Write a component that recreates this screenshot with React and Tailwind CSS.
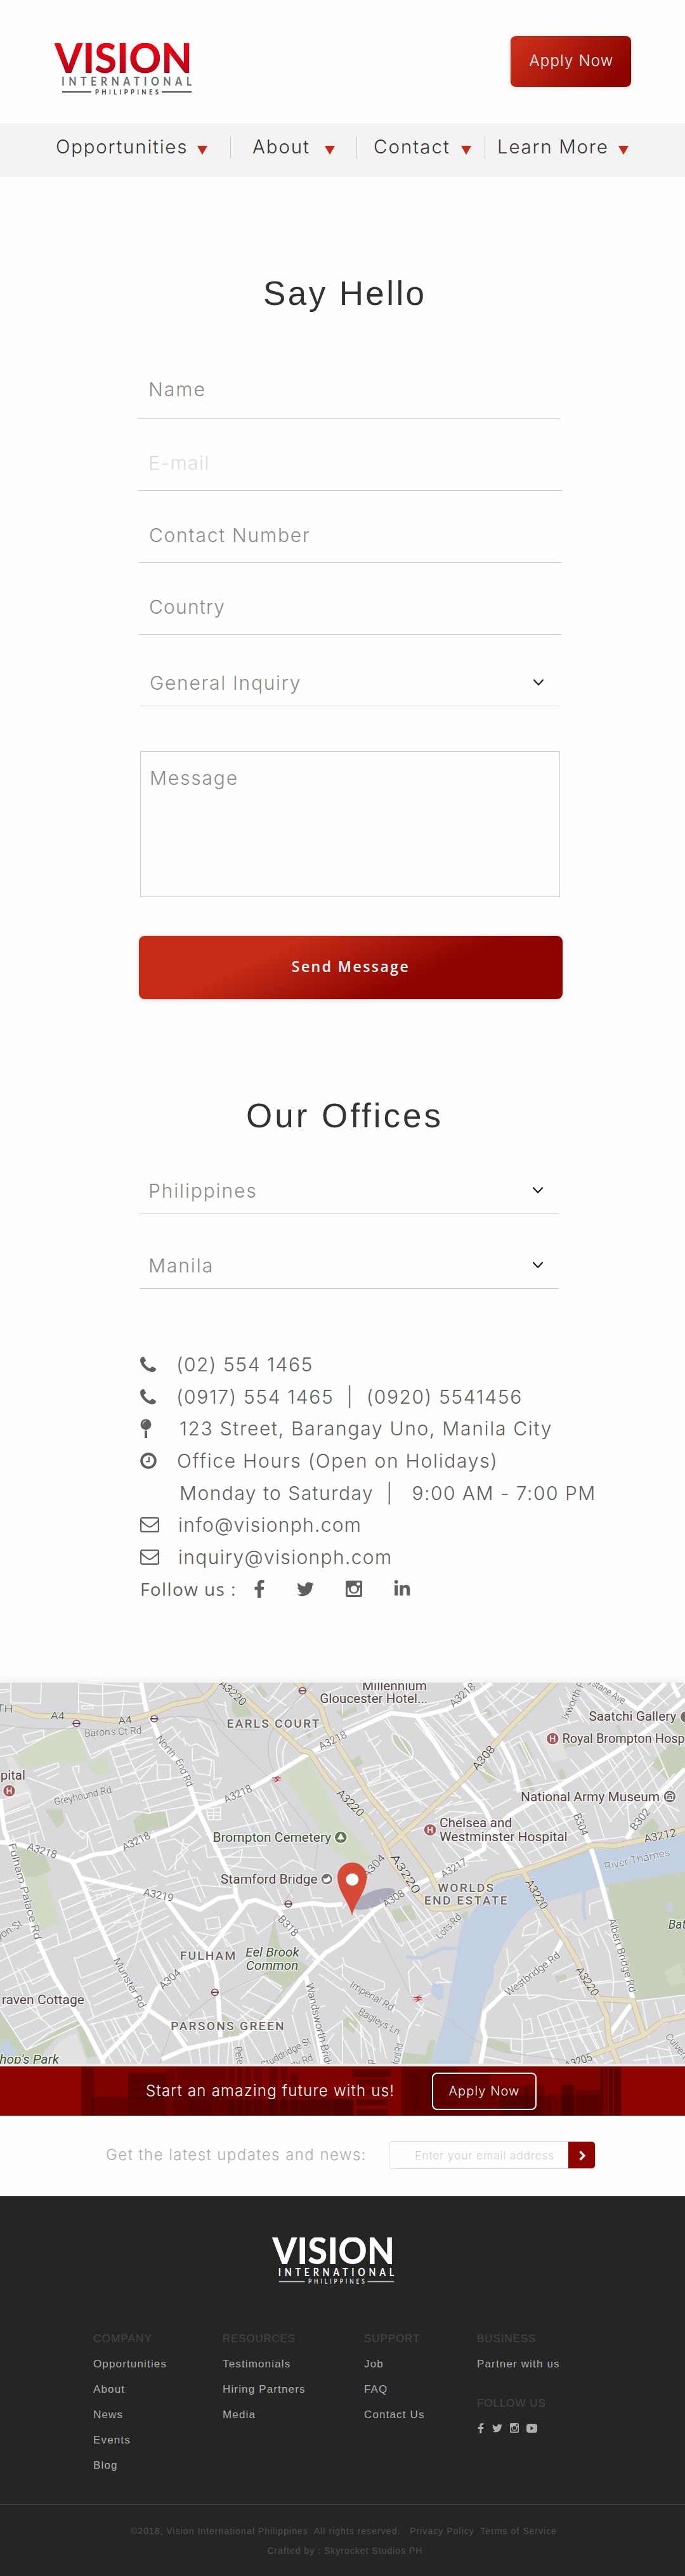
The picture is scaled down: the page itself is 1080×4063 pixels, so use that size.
import React from "react";
import { FaFacebookF, FaTwitter, FaLinkedinIn } from "react-icons/fa";

const lerp = (a, b, t) => [a[0] + (b[0] - a[0]) * t, a[1] + (b[1] - a[1]) * t];

// n parallel streets spread between segment a-b and segment c-d
const family = (a, b, c, d, n) => {
  let out = "";
  for (let i = 0; i < n; i++) {
    const t = n === 1 ? 0 : i / (n - 1);
    const p = lerp(a, b, t);
    const q = lerp(c, d, t);
    out += `M${p[0].toFixed(0)} ${p[1].toFixed(0)}L${q[0].toFixed(0)} ${q[1].toFixed(0)}`;
  }
  return out;
};

const STREETS = [
  "M0 75L40 72M360 41L650 62M190 41L185 140L50 135L50 41M0 90L48 80M360 41L360 185M360 90L470 95L570 80L650 95M470 41L470 200M570 80L555 200M360 130L440 150L655 140M375 150h50v15h-50zM680 110L740 41M680 130L790 90M735 60L800 90M820 80L850 110",
  "M0 390L60 380L220 290L350 240M350 240L420 400M105 290L200 265L200 300L120 330ZM0 350L50 340L80 380M0 280L70 250M420 380L560 320L700 250M420 400L500 350L700 300",
  "M560 320L690 300",
  family([575, 360], [640, 500], [700, 330], [720, 410], 4),
  family([500, 350], [550, 490], [575, 325], [620, 470], 4),
  "M560 320L640 510L690 660M550 490L720 420M620 520L870 480M520 550L630 510M155 640L290 560L540 490M0 670L150 610M125 490L280 550L310 600M500 350L560 520",
  "M155 460L265 420L270 440L170 485M210 500L270 470M330 440L360 520L400 590M335 440L360 435L360 470M280 600L320 570",
  "M0 600L130 560L160 640L205 790M20 670L140 625M20 710L150 665M30 750L170 700M40 790L180 745M70 800L55 760M140 800L130 740M170 810L160 760",
  "M300 660L330 730L380 780L400 750L500 710M400 750L430 850M350 760L370 740L400 760L400 820L360 840M340 840L320 870",
  family([400, 590], [500, 560], [460, 720], [540, 690], 3),
  "M540 690L620 650L690 660M650 600L860 530M660 640L880 570M670 660L890 620M760 650L775 725M500 710L540 840M430 760L510 730M450 800L520 770M510 840L560 930",
  "M740 280L790 250L820 300L870 340L900 330L1000 390L910 220L870 230L800 200L740 230M760 330L830 270M880 350L880 410L940 400L970 410L960 480L900 470L880 430M720 430L780 430L780 500L720 500ZM920 390L980 410L980 500L1015 490L990 540L930 520M1000 380L960 250L900 210M840 300L850 340M780 400L830 420",
  "M945 640L1010 630L1010 690L955 690ZM950 655h60M950 670h60M978 635v55M890 560L960 570L970 600L890 595M960 510L970 560L985 610",
  family([940, 760], [1010, 900], [1240, 690], [1200, 930], 5),
  family([1110, 570], [1240, 520], [1200, 760], [1330, 720], 3),
  "M1110 660L1200 860L1270 930M1190 540L1280 690L1400 930M1150 550L1240 650L1320 600M1280 640L1300 700M780 770L870 720L920 770L870 810L830 800M720 800L800 780L860 830L770 930M800 930L810 860L880 800M700 740L760 930",
  family([340, 900], [560, 840], [380, 990], [620, 930], 4),
  "M880 840L940 810L950 870L1010 860M880 880L920 930M840 780L830 850L860 900M1010 880L1110 830L1100 890L1040 930M1280 920L1340 880L1380 900L1440 930",
  "M1030 130Q1030 210 1090 260M1310 270L1440 190M1350 310L1500 230M1380 350L1530 260M1280 450Q1240 330 1310 270M1300 440Q1280 350 1330 300M1165 60L1200 110L1230 130L1290 41M1110 90L1165 50M1220 190L1380 41M1250 225L1430 70M1100 41L1160 90M1240 100L1310 150M1460 400L1540 500M1480 390L1568 480M1440 380L1568 330M1470 100L1568 60M1480 150L1568 110M980 140L1040 150",
  // west of Munster Road
  "M0 990L110 960M0 1040L120 1010M0 1090L130 1060M0 1140L140 1110M0 1210L150 1180M0 1290L150 1230M10 1270L50 1370L120 1560L240 1680M0 1360L170 1270L260 1230L270 1280M170 1320L330 1260M0 1450L210 1340M20 1500L240 1410",
  "M0 1580L280 1470M40 1620L300 1520M60 1680L330 1560M90 1740L370 1600M120 1780L220 1700L350 1640M0 1590L120 1780L390 1650M80 1390L120 1470L190 1640M110 1400L130 1430L150 1470L250 1410",
  "M270 1070L330 1260L480 1200M270 1070L420 1020",
  family([270, 1070], [330, 1260], [410, 1010], [470, 1190], 5),
  family([375, 1010], [470, 1230], [600, 930], [620, 1110], 4),
  family([430, 1110], [520, 1330], [720, 1000], [790, 1180], 6),
  "M340 1350L500 1280M340 1340L370 1440L520 1380M360 1450L410 1560L430 1630M380 1480L550 1400M420 1530L570 1450M430 1570L600 1490M400 1640L620 1540M410 1660L660 1600",
  "M570 1400L620 1290L670 1050M580 1040L650 1220L750 1440M520 1180L590 1170L600 1200L650 1180M640 1200L780 1460M600 1490L660 1480",
  family([640, 1300], [830, 1220], [740, 1500], [960, 1390], 6),
  family([730, 1480], [830, 1400], [830, 1620], [910, 1540], 3),
  family([420, 1650], [620, 1600], [520, 1850], [730, 1790], 5),
  "M480 1740L640 1660M510 1640L600 1840M580 1620L660 1780L640 1850L560 1750M640 1700L690 1710L700 1750L660 1780M850 1640L980 1620",
  family([780, 1640], [1000, 1560], [860, 1740], [1010, 1650], 4),
  family([860, 1760], [1100, 1700], [880, 1850], [1080, 1850], 6),
  "M420 1030L530 1010M430 1050L520 1030M440 1040L450 1070M470 1030L480 1060M500 1020L510 1055",
  "M700 930L760 960L850 930M760 1000L900 960M780 1040L920 1000L1060 1010M900 960L940 1060M860 930L920 1080M980 940L1010 1010",
  "M940 1160L1000 1150L1010 1200L950 1210ZM890 1220L980 1240L1050 1180L1110 1200L1120 1260L1040 1290L1020 1240L1060 1220M900 1290L950 1240M1100 1180L1180 1200M1130 1130L1180 1230L1270 1160M1030 1250L1070 1310",
  "M1000 1450L1200 1290M1070 1490L1200 1430L1290 1500M1100 1540L1210 1430M1020 1530L1140 1620L1200 1650M1010 1600L1090 1640L1160 1580M1130 1500L1280 1570M1110 1570L1240 1630M1200 1430L1290 1480M1100 1610L1160 1680",
  family([1370, 1090], [1530, 1080], [1440, 1260], [1568, 1200], 4),
  "M1280 1230L1440 1200L1568 1170M1330 1250L1380 1210M1400 1350L1440 1300M1430 1350L1568 1450M1450 1330L1530 1400L1568 1380M1460 1420L1568 1500M1340 1600L1360 1540L1460 1490M1420 1590L1490 1570M1270 1020L1300 1100M1300 990L1340 1060M1400 960L1430 1060L1480 1060M1200 1000L1260 1090",
  family([1210, 1640], [1400, 1600], [1280, 1850], [1460, 1850], 4),
  "M1110 1720L1140 1850M1060 1720L1070 1850M1130 1700L1220 1850M1490 1700L1568 1640M1500 1760L1568 1850M1490 1760L1530 1700",
  // Kensington and Chelsea
  family([1568, 130], [1900, 60], [1568, 190], [1780, 160], 3),
  "M1568 260L1800 160M1568 220L1690 170M1690 190L1630 50M1760 150L1690 41M1830 160L1760 41M1670 270L1800 500M1770 210L1890 400M1680 320L1740 290M1710 350L1750 310M1798 280Q1780 340 1890 400Q1900 310 1798 280M1800 270L1760 220",
  family([1660, 510], [1900, 400], [1780, 650], [2040, 560], 3),
  family([1568, 500], [1830, 760], [1890, 400], [2180, 650], 6),
  "M1660 450L1740 430L1740 500L1690 520ZM1568 600L1830 420M1600 640L1870 480M1760 450L1980 650M1810 460L1930 620M1900 400L2110 590M1650 700L1760 600M1700 760L1830 640M1730 800L1860 680M1990 660L2070 600M1960 640L2030 570L2110 580",
  family([1900, 230], [2010, 180], [2080, 440], [2210, 380], 4),
  "M1960 250L2130 490M2010 190L2220 460M2040 170L2240 420M1900 180L2010 140M1920 150L2100 110M2070 250L2180 180M2100 200L2160 190M2080 330L2140 360M2070 300L2150 280",
  family([2160, 120], [2340, 60], [2260, 300], [2460, 120], 4),
  "M2210 170L2380 41M2230 220L2460 100M2260 300L2380 230M2150 220L2230 180M2320 200L2300 170M2300 120L2340 70M2420 41L2340 130M2200 41L2260 120",
  family([2280, 350], [2430, 270], [2340, 470], [2540, 490], 4),
  "M2270 350L2420 270L2560 520M2330 350L2380 320L2430 430L2400 440M2450 290L2540 250L2650 220M2460 400L2500 500M2350 520L2460 470M2290 470L2310 410M2350 550L2590 500M2390 600L2480 540M2180 560L2340 500M2250 640L2340 590",
  "M2120 480L2260 640M2180 440L2310 520M2240 370L2300 480M2060 470L2180 600M2080 620L2240 590M1990 690L2060 650L2210 660M2060 680L2220 720M2120 700L2130 780M1990 760L2200 860",
  family([2560, 110], [2700, 41], [2610, 240], [2860, 200], 5),
  "M2570 150L2640 160L2700 240M2640 41L2800 220M2700 90L2930 230M2740 60L2970 200M2800 41L3000 150M2620 120L2600 230M2860 120L2740 230M2950 41L3060 150M2980 180L3136 41M3020 210L3080 160M2870 41L2960 130M2590 60L2660 200",
  family([2610, 400], [3010, 200], [2690, 500], [3120, 330], 7),
  family([2650, 470], [2980, 300], [2800, 700], [3080, 540], 6),
  family([2700, 560], [2990, 660], [2900, 360], [3136, 500], 6),
  family([2290, 690], [2490, 570], [2440, 910], [2650, 790], 5),
  family([2360, 750], [2440, 900], [2590, 630], [2690, 790], 4),
  "M2520 560L2600 720M2480 580L2560 740M2570 680L2680 660M2790 700L2870 600L2890 800M2860 640L2940 560L3110 650M2990 600L3060 720M3020 570L3100 700M2700 790L2860 770M2720 620L2770 790",
  family([1980, 800], [2200, 740], [2060, 930], [2360, 830], 5),
  family([1900, 1050], [2040, 900], [2060, 930], [2230, 880], 3),
  // Worlds End and Sands End
  "M1740 1060L1890 1310L1930 1380M1840 1020L1990 1200M1568 1110L1690 960M1568 1190L1660 1140L1740 1270L1710 1260L1620 1130M1690 1100L1740 1200L1840 1290L1850 1270L1740 1070",
  family([1840, 1240], [1890, 1310], [2030, 1120], [2080, 1200], 3),
  family([1830, 1100], [2050, 1080], [1960, 1290], [2100, 1190], 5),
  "M1568 1340L1580 1380L1760 1460L1760 1490L1680 1510M1568 1370L1568 1430L1620 1480L1830 1600L1880 1650L1870 1680M1568 1490L1640 1570L1700 1580M1890 1360L2000 1500L1930 1530M1900 1380L1870 1410L1880 1520L1940 1590L2070 1640M1980 1400L2010 1390L2020 1440L2060 1460M1990 1500L2000 1460L2065 1460M1820 1510L1800 1600L1780 1560L1830 1490M1940 1560L1870 1680L1830 1850M1900 1580L1940 1600L1930 1620M1900 1660L1925 1665",
  family([1650, 1660], [1820, 1720], [1700, 1850], [1840, 1790], 3),
  family([1568, 1640], [1820, 1690], [1568, 1850], [1830, 1760], 4),
  "M1568 1720L1640 1850M1580 1570L1700 1720L1720 1850M1600 1650L1720 1780M1568 1590L1620 1640",
  // Battersea
  "M2290 1460L2330 1380L2470 1240L2570 1190L2650 1240L2700 1210L2780 1180L2800 1160M2400 1290L2620 1160M2400 1200L2470 1160L2460 1230L2390 1240ZM2350 1370L2380 1430M2320 1300L2330 1380M2430 1330L2480 1390M2450 1130L2480 1200M2550 1150L2590 1240M2290 1440L2370 1400L2370 1450",
  "M2290 1460L2290 1490L2310 1520L2500 1520L2570 1540L2740 1550L2900 1550M2400 1460L2420 1540L2480 1520M2530 1420L2670 1350M2560 1460L2690 1420M2640 1430L2680 1530M2620 1490L2720 1460L2800 1450",
  family([2720, 1220], [2790, 1180], [2740, 1290], [2810, 1270], 2),
  "M2650 1250L2690 1390L2700 1480M2620 1170L2700 1300M2760 1070L2700 1090L2700 1140M2730 1190L2790 1320L2810 1450L2800 1600M2770 1220L2820 1260M2690 1470L2900 1450M2720 1500L2730 1540",
  family([2460, 1620], [2640, 1550], [2540, 1850], [2750, 1790], 5),
  family([2460, 1620], [2520, 1740], [2640, 1550], [2760, 1690], 3),
  "M2230 1720L2400 1730L2560 1710L2700 1670L2780 1620M2390 1640L2390 1850M2350 1560L2390 1640M2340 1720L2340 1780L2390 1790M2400 1640L2430 1630L2440 1700L2390 1710M2500 1750L2560 1860M2410 1800L2550 1770M2210 1810L2400 1850",
  family([2640, 1700], [2780, 1640], [2740, 1850], [2800, 1770], 4),
  "M2730 1860L2900 1790L3136 1700M2800 1730L2900 1680M2830 1770L2870 1640L2900 1680M2900 1550L3136 1520M2940 1550L2970 1720M3000 1550L3030 1650M3080 1540L3100 1640M2950 1720L3136 1590M2900 1830L3136 1800M2960 1800L2970 1860M3010 1780L3030 1860M3060 1760L3090 1860M2960 1760L3060 1780",
].join("");

const PARKS = [
  "M1063 120L1110 120L1160 200L1080 205Q1050 160 1063 120M1155 70L1190 50L1225 95L1205 120M1395 270L1415 260L1430 295L1410 305",
  "M205 640L285 640L295 700L260 730M610 690L670 645L755 655L775 725L625 755M60 820L200 840L235 930L170 960L110 960",
  "M1255 1160L1285 1300L1420 1390L1310 1490L1200 1640L1185 1640L1300 1490L1210 1420M1015 1600L1120 1710L1020 1720",
  "M0 1590L115 1780L340 1640L370 1650L440 1810L400 1820L350 1670L260 1720L200 1790L180 1850L0 1850",
  "M1798 280Q1785 340 1893 400Q1890 320 1798 280M1603 415L1643 385L1663 425L1623 445M2183 450L2228 430L2278 495L2238 520M2368 335L2408 320L2443 395L2413 415M2038 370L2118 470L2105 465M2393 490L2423 485L2453 560L2428 555M2553 460L2578 450L2593 490L2568 500",
  "M2978 425L3068 330L3136 350L3136 470L3068 515M3048 230L3136 200L3136 310L3060 250M2928 740L2988 680L3018 720L3008 750L2930 765M2208 165L2223 150L2258 195L2238 205M1568 180L1628 150L1635 175L1568 210M1540 180L1568 160V210",
  "M2580 350L2600 310L2650 340M2820 245L2835 240L2850 290L2840 290M2350 675L2365 680L2390 750L2370 730M2540 870L2680 825L2690 835",
  "M2773 1000L3136 930L3136 1525L2908 1542M1793 1120L1883 1090L1908 1160L1808 1180M2538 1430L2588 1420L2598 1450L2553 1465M2228 1720L2328 1750L2343 1800L2223 1760M1843 1790L1948 1805L1968 1730L1998 1735L1968 1850L1840 1850M2108 1140L2138 1120L2148 1145L2128 1170M1568 1640L1628 1600L1658 1610L1618 1700L1568 1660",
].join("");

const PALE_PARKS =
  "M60 380L220 270L360 255L410 420L310 425L100 445ZM395 430L480 385L515 465L450 485ZM1290 470L1415 395L1568 700L1720 880L1640 920L1520 830ZM110 960L210 940L275 1180L170 1225ZM160 1760L330 1640L345 1650L200 1780Z";

const WHITE_ROADS = [
  "M645 41L670 170L705 240L740 340L830 430L870 530L905 640L960 760L1040 930L1075 990L1080 1050L1105 1110",
  "M0 795L100 810L250 860L340 890L430 855L510 845L640 790L780 735Q860 700 905 640L1080 580L1210 505L1400 385L1568 290L1640 255L1790 185L1920 200L2040 170L2120 130L2200 80L2250 41",
  "M0 590L20 740L45 810L100 960L150 1210L250 1440L340 1590L400 1690L470 1830L475 1860",
  "M330 885L370 970L440 1150L520 1330L600 1500L680 1590L780 1660L855 1775",
  "M370 965L640 1025L770 1060L915 1115L1000 1062L1080 1050",
  "M760 1070L860 1210L955 1310L990 1430L1000 1550L1010 1720",
  "M955 1310L1130 1080L1170 1070L1270 1110L1430 1085L1500 1095L1568 1090",
  "M470 1820L660 1620L720 1490L830 1400L955 1350",
  "M740 1825L850 1775L1100 1720L1210 1640L1290 1560L1390 1430L1490 1320L1568 1270L1718 1115L1868 1015L2028 940L2140 870L2215 830L2220 775L2330 670L2560 530L2850 350L3000 240L3136 120",
  "M1270 1110L1350 1230L1460 1350M1400 1430L1430 1560L1480 1860",
  "M1905 195L1988 320L2098 500L2208 620L2268 740L2388 920M2128 41L2188 190L2288 310L2348 430L2378 560M2553 530L2628 650L2698 800L2738 930L2798 1160L2898 1540M2868 780L2968 620L3136 450M2918 170L3048 41M2748 41L2938 180M3078 41L3108 110",
  "M2573 1260L2528 1350L2308 1510L2218 1600L2208 1670L2223 1720L2198 1860M2898 1550L2788 1710",
];

const BEIGE_ROADS = [
  "M0 158L60 160Q110 175 140 190T250 197Q340 195 440 210Q520 228 600 215Q700 190 790 145L920 120Q970 95 1000 30",
  "M1000 30L1115 110L1240 225L1380 360L1420 372L1500 500L1568 570L1680 680L1750 790L1790 880L1878 1000Q1950 1110 2000 1112Q2110 1115 2180 1070Q2215 1030 2240 980Q2260 955 2400 933",
  "M1350 30L1470 160L1500 260L1568 370L1700 590L1835 755L1960 930L2005 1025",
  "M2550 30L2310 280L2130 490L1960 650L1778 818",
  "M3150 730L2990 775L2810 815Q2700 800 2670 830Q2570 870 2380 935",
  "M2393 930L2488 1110L2588 1260L2628 1330L2678 1430L2738 1530L2778 1620L2788 1730L2840 1870",
  "M2738 1538L2898 1548L2948 1710M2668 1820L2798 1770L2948 1710L3038 1640L3150 1615",
];

// text, x, y, rotation, size, drawn length, colour
const LABELS = [
  ["A4", 232, 212, 3, 48, 62, "#3c3c3c"],
  ["A4", 543, 238, -6, 48, 62, "#3c3c3c"],
  ["TH", -18, 180, 3, 52, 78, "#666"],
  ["Baron's Ct Rd", 388, 296, -3, 47, 262, "#5c5c5c"],
  ["North", 712, 308, 50, 46, 116, "#5c5c5c"],
  ["End Rd", 802, 410, 66, 46, 138, "#5c5c5c"],
  ["Greyhound Rd", 252, 622, -13, 46, 268, "#5c5c5c"],
  ["A3218", 1034, 612, -25, 49, 136, "#505050"],
  ["A3218", 570, 838, -27, 49, 136, "#505050"],
  ["A3218", 122, 830, 18, 49, 138, "#505050"],
  ["A3218", 1470, 360, -27, 49, 136, "#505050"],
  ["A3218", 2076, 158, -42, 49, 140, "#505050"],
  ["A3220", 1000, 49, 44, 51, 150, "#2c2c2c"],
  ["A3220", 1538, 566, 46, 51, 155, "#2c2c2c"],
  ["A308", 2184, 458, -50, 51, 132, "#2c2c2c"],
  ["A3220", 1786, 866, 58, 51, 210, "#2c2c2c"],
  ["A304", 1680, 968, -48, 49, 128, "#505050"],
  ["A3217", 2032, 966, -32, 47, 128, "#505050"],
  ["Fulham Palace Rd", 38, 806, 75, 46, 470, "#5c5c5c"],
  ["A3219", 655, 1048, 12, 49, 138, "#505050"],
  ["B318", 1270, 1162, 48, 49, 112, "#505050"],
  ["Munster Rd", 518, 1354, 62, 47, 262, "#5c5c5c"],
  ["A304", 746, 1495, -42, 49, 114, "#505050"],
  ["Bryon St", -44, 1286, -33, 47, 178, "#5c5c5c"],
  ["Wandsworth Bridge", 1400, 1468, 77, 47, 440, "#5c5c5c"],
  ["Studdridge St", 1206, 1868, -29, 46, 252, "#5c5c5c"],
  ["Party Rd", 1292, 1886, -22, 46, 155, "#5c5c5c"],
  ["Peterb", 1072, 1766, 80, 46, 125, "#5c5c5c"],
  ["A308", 1766, 1106, -33, 49, 108, "#505050"],
  ["Lots Rd", 2014, 1258, -46, 47, 146, "#5c5c5c"],
  ["Imperial Rd", 1598, 1480, 31, 47, 226, "#5c5c5c"],
  ["Bagleys Ln", 1636, 1608, 29, 47, 212, "#5c5c5c"],
  ["ford Rd", 1824, 1850, -78, 46, 100, "#5c5c5c"],
  ["d", 1684, 1824, 92, 46, 22, "#5c5c5c"],
  ["A3220", 2404, 986, 60, 51, 152, "#2c2c2c"],
  ["A3220", 2634, 1400, 58, 51, 152, "#2c2c2c"],
  ["Westbridge Rd", 2328, 1526, -38, 47, 304, "#5c5c5c"],
  ["Albert Bridge Rd", 2784, 1162, 74, 47, 362, "#5c5c5c"],
  ["A3205", 2594, 1872, -20, 51, 128, "#2c2c2c"],
  ["Culvert", 3044, 1716, 52, 46, 140, "#5c5c5c"],
  ["B304", 2624, 668, 68, 49, 108, "#505050"],
  ["B302", 2908, 744, -52, 49, 116, "#505050"],
  ["A3212", 2952, 798, -12, 51, 150, "#2c2c2c"],
  ["Ixworth Pl", 2598, 220, -66, 46, 205, "#5c5c5c"],
  ["Elystane Ave", 2664, 26, 32, 46, 220, "#5c5c5c"],
  ["River Thames", 2770, 928, -13, 49, 308, "#66788f"],
];

// text, x, y, size, drawn length, colour, style
const PLACES = [
  ["EARLS COURT", 1038, 253, 56, 424, "#6d645d", "a"],
  ["FULHAM", 824, 1354, 56, 254, "#6d645d", "a"],
  ["PARSONS GREEN", 782, 1686, 56, 518, "#6d645d", "a"],
  ["WORLDS", 2004, 1032, 56, 256, "#6d645d", "a"],
  ["END ESTATE", 1942, 1092, 56, 380, "#6d645d", "a"],
  ["Millennium", 1658, 76, 60, 296, "#51413d", "p"],
  ["Gloucester Hotel...", 1464, 138, 60, 494, "#51413d", "p"],
  ["Saatchi Gallery", 2696, 222, 60, 400, "#51413d", "p"],
  ["Royal Brompton Hospital", 2574, 326, 60, 640, "#51413d", "p"],
  ["National Army Museum", 2384, 601, 60, 636, "#51413d", "p"],
  ["Chelsea and", 2012, 726, 60, 332, "#51413d", "p"],
  ["Westminster Hospital", 2012, 790, 60, 586, "#51413d", "p"],
  ["Brompton Cemetery", 974, 794, 60, 542, "#3b4f32", "p"],
  ["Stamford Bridge", 1010, 992, 60, 444, "#51413d", "p"],
  ["pital", 2, 500, 60, 114, "#51413d", "p"],
  ["raven Cottage", 8, 1564, 60, 378, "#51413d", "p"],
  ["Eel Brook", 1124, 1338, 60, 246, "#3b4f32", "i"],
  ["Common", 1126, 1402, 60, 240, "#3b4f32", "i"],
  ["hop's Park", -2, 1844, 60, 272, "#3b4f32", "i"],
  ["Battersea", 3060, 1206, 60, 230, "#3b4f32", "i"],
];

const TUBES = [[350, 234], [706, 212], [1385, 79], [1320, 1089], [984, 1507]];

function MapView() {
  return (
    <svg
      className="block h-[601px] w-full shrink-0 overflow-hidden bg-[#d9d9db]"
      viewBox="0 41 3136 1804"
      preserveAspectRatio="none"
      fill="none"
      strokeLinejoin="round"
      fontFamily="Roboto, sans-serif"
    >
      <path d={PALE_PARKS} fill="#d2dac8" />
      <path d={PARKS} fill="#c7d0ba" />
      <path d="M3040 1410L3110 1370L3136 1440V1460L3070 1478Z" fill="#d0d7c5" />
      <path d="M25 395L60 390L110 500L150 560L140 590L20 650L10 610L60 570L70 510ZM2460 280L2540 250L2600 400L2530 420ZM200 1850L270 1740L350 1700L400 1850Z" fill="#e4e2e1" />
      <path d="M2230 1000L2150 1120L2100 1280L2060 1600L1990 1700L2000 1850L2180 1850L2250 1600L2300 1450L2400 1250L2500 1130L2780 1060L2790 1010Z" fill="#dbd9d9" />
      <path d={STREETS} stroke="#f8f8f9" strokeWidth="5.500" />
      <path
        d="M3136 755L2990 790L2810 832L2690 825L2400 950Q2250 985 2215 1060L2128 1170Q2098 1230 2098 1280L2078 1410L2038 1620L1968 1850L2148 1850L2208 1580L2232 1500L2258 1460L2262 1380L2278 1350Q2310 1250 2398 1140Q2440 1100 2500 1080L2768 1000L3136 935Z"
        fill="#c2d0e1"
      />
      <path d="M1858 1338L1930 1345L2020 1300L2095 1298M2674 1020L2670 1120L2680 1165" stroke="#c2d0e1" strokeWidth="16" />
      <path d="M1980 1465L2030 1470L2032 1530L2005 1545L1972 1510ZM0 1760L40 1725L50 1760L85 1780L60 1810L0 1820ZM3046 1080L3075 1090L3080 1135L3062 1120Z" fill="#c2d0e1" />
      <path
        d="M0 240Q200 270 350 255Q540 280 690 230Q760 190 900 205Q1000 220 1010 245M890 41L1030 245Q1090 270 1180 265M1430 41L1270 230Q1190 330 1260 480M930 120L1000 260L1240 500L1400 710Q1460 830 1460 760L1440 920M1340 1020L1260 1150L1230 1290M1280 1390L960 1540L780 1690L730 1850M1690 1130L1840 1440L1900 1560M1950 1580L2060 1640L2170 1730L2300 1790L2600 1830"
        stroke="#c5c5c8"
        strokeWidth="4"
      />
      {WHITE_ROADS.map((d) => (
        <path key={d} d={d} stroke="#fff" strokeWidth="21" />
      ))}
      {BEIGE_ROADS.map((d) => (
        <path key={d} d={d} stroke="#c8c1a4" strokeWidth="28" />
      ))}
      {BEIGE_ROADS.map((d) => (
        <path key={d} d={d} stroke="#e7dec3" strokeWidth="21" />
      ))}

      <ellipse cx="1710" cy="1065" rx="105" ry="36" transform="rotate(-22 1710 1065)" fill="#55557a" fillOpacity="0.35" />

      {TUBES.map(([x, y]) => (
        <g key={x}>
          <circle cx={x} cy={y} r="15" fill="#fff" stroke="#9a4a4d" strokeWidth="5" />
          <path d={`M${x - 18} ${y}H${x + 18}`} stroke="#3d4474" strokeWidth="6" />
        </g>
      ))}
      {[[1266, 497], [1912, 1537]].map(([x, y]) => (
        <path
          key={x}
          d={`M${x - 20} ${y - 5}h40M${x - 20} ${y + 5}h40M${x + 12} ${y - 14}l-20 9l18 10l-20 10`}
          stroke="#c0454a"
          strokeWidth="4"
        />
      ))}

      {LABELS.map(([t, x, y, r, s, w, c], i) => (
        <text
          key={i}
          transform={`translate(${x} ${y}) rotate(${r})`}
          fontSize={s}
          textLength={w}
          lengthAdjust="spacingAndGlyphs"
          fill={c}
          stroke="#ededee"
          strokeWidth="6"
          paintOrder="stroke"
        >
          {t}
        </text>
      ))}
      {PLACES.map(([t, x, y, s, w, c, k]) => (
        <text
          key={t}
          x={x}
          y={y}
          fontSize={s}
          textLength={w}
          lengthAdjust={k === "a" ? "spacing" : "spacingAndGlyphs"}
          fontStyle={k === "i" ? "italic" : "normal"}
          fontWeight={k === "a" ? 500 : 400}
          fill={c}
          stroke="#f6f6f6"
          strokeWidth="8"
          paintOrder="stroke"
        >
          {t}
        </text>
      ))}

      {[[42, 553], [2530, 306], [1969, 738]].map(([cx, cy]) => (
        <g key={cx}>
          <circle cx={cx} cy={cy} r="29" fill="#a35a5c" stroke="#fff" strokeWidth="4" />
          <path d={`M${cx - 9} ${cy - 15}v30M${cx + 9} ${cy - 15}v30M${cx - 9} ${cy}h18`} stroke="#fff" strokeWidth="5" />
        </g>
      ))}
      <circle cx="3066" cy="580" r="29" fill="#766c68" stroke="#fff" strokeWidth="4" />
      <path d="M3048 574L3066 561L3084 574ZM3052 577V594H3080V577M3062 594V585H3070V594" stroke="#fff" strokeWidth="4" />
      <circle cx="3142" cy="203" r="29" fill="#766c68" stroke="#fff" strokeWidth="4" />
      <circle cx="1560" cy="773" r="29" fill="#5d7a50" stroke="#fff" strokeWidth="4" />
      <path d="M1560 755L1546 782H1574ZM1560 782V792" fill="#fff" stroke="#fff" strokeWidth="3" />
      <circle cx="1496" cy="971" r="27" fill="#7a706a" stroke="#fff" strokeWidth="4" />
      <path d="M1480 965Q1494 975 1506 955L1514 975Q1500 990 1482 985Z" fill="#fff" />

      <path
        d="M1612 1144C1600 1080 1545 1030 1545 960A67 68 0 0 1 1679 960C1679 1030 1624 1080 1612 1144Z"
        fill="#d64a37"
      />
      <circle cx="1613" cy="973" r="29" fill="#fff" />
    </svg>
  );
}

function Logo({ light }) {
  const id = light ? "logo-light" : "logo-red";
  return (
    <svg
      className={light ? "block h-[75px] w-[194px]" : "block h-[83px] w-[218px]"}
      viewBox="0 0 218 83"
      preserveAspectRatio="none"
      fontFamily="Lato, sans-serif"
    >
      <defs>
        <linearGradient id={id} x1="0" y1="0" x2="0" y2="1">
          <stop offset="0.1" stopColor={light ? "#fff" : "#fb0512"} />
          <stop offset="0.85" stopColor={light ? "#fff" : "#b00618"} />
        </linearGradient>
      </defs>
      <text x="0" y="47" fontSize="65" fontWeight="900" textLength="217" lengthAdjust="spacingAndGlyphs" fill={`url(#${id})`}>
        VISION
      </text>
      <text transform="translate(11 67) scale(0.82 1)" fontSize="19.500" fontWeight="700" textLength="250" fill={light ? "#fff" : "#66706c"}>
        INTERNATIONAL
      </text>
      <text transform="translate(64 81) scale(0.82 1)" fontSize="11.500" fontWeight="700" textLength="122" fill={light ? "#ddd" : "#3a3a3a"}>
        PHILIPPINES
      </text>
      <path d="M12 77H58M169 77H216" stroke={light ? "#bbb" : "#4a4a4a"} strokeWidth="2" />
    </svg>
  );
}

const Triangle = () => (
  <span className="mt-2.5 shrink-0 border-x-[8px] border-t-[14px] border-x-transparent border-t-[#c42b1a]" />
);

const Chevron = () => (
  <svg className="h-3 w-[18px]" viewBox="0 0 18 12" fill="none" stroke="#1c1c1c" strokeWidth="2.2" strokeLinecap="round">
    <path d="M2 1.500L9 9L16 1.500" />
  </svg>
);

const Phone = () => (
  <svg className="h-6 w-[25px]" viewBox="0 0 1408 1408" preserveAspectRatio="none" fill="currentColor">
    <path d="M1408 1112q0 27-10 70.500t-21 68.500q-21 50-122 106-94 51-186 51-27 0-53-3.500t-57.500-12.500-47-14.500-55.500-20.500-49-18q-98-35-175-83-127-79-264-216t-216-264q-48-77-83-175-3-9-18-49t-20.500-55.500-14.500-47-12.500-57.500-3.500-53q0-92 51-186 56-101 106-122 25-11 68.500-21t70.500-10q14 0 21 3 18 6 53 76 11 19 30 54t35 63.500 31 53.500q3 4 17.500 25t21.500 35.500 7 28.500q0 20-28.500 50t-62 55-62 53-28.500 46q0 9 5 22.500t8.500 20.500 14 24 11.500 19q76 137 174 235t235 174q2 1 19 11.500t24 14 20.500 8.500 22.500 5q18 0 46-28.500t53-62 55-62 50-28.500q14 0 28.500 7t35.500 21.500 25 17.500q25 15 53.500 31t63.500 35 54 30q70 35 76 53 3 7 3 21z" />
  </svg>
);

const MapPin = () => (
  <svg className="h-[30px] w-[18px]" viewBox="0 0 18 30" fill="currentColor">
    <circle cx="9" cy="8.700" r="8.500" />
    <path d="M7 18.500h4V30H7z" />
    <path d="M4.200 8.500A5 5 0 0 1 9 3.500" fill="none" stroke="#fff" strokeWidth="1.200" />
  </svg>
);

const Clock = () => (
  <svg className="size-[26px]" viewBox="0 0 26 26" fill="none" stroke="currentColor">
    <circle cx="13" cy="13" r="10.800" strokeWidth="4" />
    <path d="M14 7v7.200H9" strokeWidth="2" />
  </svg>
);

const Envelope = () => (
  <svg className="h-6 w-[30px]" viewBox="0 0 30 24" fill="none" stroke="currentColor" strokeWidth="2.200">
    <rect x="1.100" y="1.100" width="27.800" height="21.800" rx="2.200" />
    <path d="M1.500 5Q3 8 7 10.500Q13 15.500 15 15.500T23 10.500Q27 8 28.500 5" />
  </svg>
);

const Instagram = ({ className }) => (
  <svg className={className} viewBox="0 0 26 26" fillRule="evenodd" preserveAspectRatio="none">
    <path
      fill="currentColor"
      d="M3 0H23A3 3 0 0 1 26 3V23A3 3 0 0 1 23 26H3A3 3 0 0 1 0 23V3A3 3 0 0 1 3 0ZM3 11V21.500A1.500 1.500 0 0 0 4.500 23H21.500A1.500 1.500 0 0 0 23 21.500V11H20.800A8 8 0 1 1 5.200 11ZM18.500 3A1 1 0 0 0 17.500 4V6.500A1 1 0 0 0 18.500 7.500H22A1 1 0 0 0 23 6.500V4A1 1 0 0 0 22 3ZM13 8A5.200 5.200 0 1 0 13 18.400A5.200 5.200 0 1 0 13 8Z"
    />
  </svg>
);

const Play = () => (
  <svg className="h-3.5 w-[17px]" viewBox="0 0 17 14">
    <rect width="17" height="14" rx="4" fill="currentColor" />
    <path d="M6.500 3.800L11.500 7L6.500 10.200Z" fill="#252525" />
  </svg>
);

const NAV = [
  { label: "Opportunities", box: "w-[364px] pl-[88px] border-r", text: "w-[223px] tracking-[1.8px]" },
  { label: "About", box: "w-[199px] pl-[34px] border-r", text: "w-[114px] tracking-[1.9px]" },
  { label: "Contact", box: "w-[202px] pl-[26px] border-r", text: "w-[138px] tracking-[2px]" },
  { label: "Learn More", box: "w-[315px] pl-[19px]", text: "w-[191px] tracking-[1.75px]" },
];

const FIELDS = [
  { label: "Name", box: "ml-[217px] h-[93px] w-[667px] pl-[17px] tracking-[2px] text-[#8b8b8b]" },
  { label: "E-mail", box: "ml-[218px] mt-[26px] h-[87px] w-[667px] pl-[16px] tracking-[1.5px] text-[#dcdcdc]" },
  { label: "Contact Number", box: "ml-[218px] mt-[26px] h-[88px] w-[667px] pl-[17px] tracking-[1.75px] text-[#8b8b8b]" },
  { label: "Country", box: "ml-[218px] mt-[26px] h-[87px] w-[667px] pl-[17px] tracking-[1.2px] text-[#8b8b8b]" },
];

const CONTACTS = [
  { icon: <Phone />, text: "(02) 554 1465", cls: "w-[57px]", track: "tracking-[1.55px]" },
  { icon: <Phone />, text: "(0917) 554 1465  |  (0920) 5541456", cls: "w-[57px]", track: "tracking-[1.63px]" },
  { icon: <MapPin />, text: "123 Street, Barangay Uno, Manila City", cls: "w-[62px]", track: "tracking-[1.7px]" },
  { icon: <Clock />, text: "Office Hours (Open on Holidays)", cls: "w-[58px]", track: "tracking-[1.7px]" },
  { icon: null, text: "Monday to Saturday  |   9:00 AM - 7:00 PM", cls: "w-[62px]", track: "tracking-[1.47px]" },
  { icon: <Envelope />, text: "info@visionph.com", cls: "w-[60px]", track: "tracking-[1.27px]" },
  { icon: <Envelope />, text: "inquiry@visionph.com", cls: "w-[60px]", track: "tracking-[1.32px]" },
];

const COLUMNS = [
  { title: "COMPANY", cls: "w-[204px]", track: "tracking-[1.2px]", links: ["Opportunities", "About", "News", "Events", "Blog"] },
  { title: "RESOURCES", cls: "w-[223px]", track: "tracking-[0.8px]", links: ["Testimonials", "Hiring Partners", "Media"] },
  { title: "SUPPORT", cls: "w-[178px]", track: "tracking-[0.9px]", links: ["Job", "FAQ", "Contact Us"] },
  { title: "BUSINESS", cls: "w-[160px]", track: "tracking-[0.9px]", links: ["Partner with us"] },
];

// x, y, width, height, opacity of each building silhouette
const SKYLINE = [
  [0, 0, 20, 78, 0.3], [16, 48, 60, 30, 0.3], [74, 10, 60, 68, 0.45], [80, 20, 44, 3, 0.3], [80, 34, 44, 3, 0.3], [80, 48, 44, 3, 0.3],
  [134, 4, 14, 74, 0.25], [150, 0, 78, 40, 0.28], [146, 40, 84, 38, 0.4], [170, 50, 36, 28, 0.2], [232, 0, 10, 78, 0.3], [246, 0, 8, 78, 0.35],
  [258, 0, 10, 78, 0.3], [272, 0, 14, 78, 0.25], [296, 0, 14, 78, 0.3], [314, 0, 12, 78, 0.25], [330, 10, 12, 68, 0.3], [230, 52, 200, 26, 0.4],
  [344, 36, 50, 42, 0.25], [396, 50, 32, 28, 0.3], [428, 4, 60, 12, 0.45], [434, 20, 50, 10, 0.4], [434, 36, 50, 8, 0.4], [434, 52, 50, 10, 0.45], [434, 68, 50, 10, 0.4],
  [505, 0, 90, 78, 0.4], [520, 10, 12, 60, 0.25], [545, 6, 12, 66, 0.2], [595, 10, 50, 68, 0.35], [645, 30, 60, 48, 0.3], [660, 46, 80, 32, 0.35],
  [700, 28, 30, 50, 0.3], [757, 28, 20, 50, 0.5], [736, 44, 80, 34, 0.3], [780, 36, 40, 42, 0.25], [818, 0, 6, 78, 0.4], [826, 0, 4, 78, 0.3], [832, 0, 6, 78, 0.45], [840, 0, 11, 78, 0.4],
];

const Select = ({ label, className }) => (
  <div className={`flex w-[661px] items-center justify-between border-b border-[#c9c9c9] pr-6 text-[30px] text-[#8b8b8b] ${className}`}>
    <span>{label}</span>
    <Chevron />
  </div>
);

export default function App() {
  return (
    <div className="flex h-[4063px] w-[1080px] flex-col overflow-hidden bg-[#fefefe] font-['Inter',sans-serif] font-light leading-none">
      <header className="flex h-[195px] shrink-0 items-start justify-between pl-[86px] pr-[85px]">
        <div className="pt-[68px]">
          <Logo />
        </div>
        <button className="mt-[57px] h-20 w-[190px] rounded-lg bg-linear-[135deg,#c92d18_10%,#8e0400_85%] pb-[3px] pl-0.5 text-2xl leading-none font-light tracking-[1.2px] text-white shadow-[0_1px_8px_rgba(0,0,0,0.12)]">
          Apply Now
        </button>
      </header>

      <nav className="flex h-[84px] shrink-0 items-center bg-[#f3f3f3] pb-2.5 text-[29.5px] text-[#363636]">
        {NAV.map((n) => (
          <div key={n.label} className={`flex h-[35px] shrink-0 items-center border-[#c8c8c8] ${n.box}`}>
            <span className={`shrink-0 whitespace-nowrap ${n.text}`}>{n.label}</span>
            <Triangle />
          </div>
        ))}
      </nav>

      <main className="flex flex-col">
        <h1 className="mt-[154px] h-[60px] pl-[415px] font-['Liberation_Sans',sans-serif] text-[53px] leading-[60px] font-normal tracking-[3.4px] text-[#333]">
          Say Hello
        </h1>
        <form className="mt-[75px] flex flex-col">
          {FIELDS.map((f) => (
            <label key={f.label} className={`flex items-center border-b border-[#c9c9c9] text-[30px] ${f.box}`}>
              {f.label}
            </label>
          ))}
          <Select label="General Inquiry" className="mt-10 ml-[221px] h-[73px] pl-[15px] tracking-[1.7px]" />
          <div className="mt-[71px] ml-[221px] h-[230px] w-[662px] border border-[#c9c9c9] pt-[26px] pl-[14px] text-[30px] tracking-[1.8px] text-[#8b8b8b]">
            Message
          </div>
          <button
            type="button"
            className="mt-[61px] ml-[219px] h-[100px] w-[668px] rounded-[9px] bg-linear-[155deg,#c62c17_30%,#8e0400_66%] pb-[3px] font-['Open_Sans',sans-serif] text-[23px] leading-none font-semibold tracking-[2.45px] text-white shadow-[0_1px_10px_rgba(0,0,0,0.13)]"
          >
            Send Message
          </button>
        </form>

        <h2 className="mt-[154px] h-[60px] pl-[388px] font-['Liberation_Sans',sans-serif] text-[53px] leading-[60px] font-normal tracking-[4px] text-[#333]">
          Our Offices
        </h2>
        <Select label="Philippines" className="mt-[52px] ml-[220px] h-[73px] pl-[14px] tracking-[1.85px]" />
        <Select label="Manila" className="mt-[45px] ml-[220px] h-[73px] pl-[14px] tracking-[1.9px]" />

        <section className="mt-[94px] flex flex-col pl-[221px] text-[30px] text-[#5f5f5f]">
          {CONTACTS.map((c) => (
            <div key={c.text} className="flex h-[50.6px] items-center">
              <span className={`flex shrink-0 items-center ${c.cls}`}>{c.icon}</span>
              <span className={`whitespace-pre ${c.track}`}>{c.text}</span>
            </div>
          ))}
          <div className="flex h-[50.6px] items-center">
            <span className="w-[174px] font-['Open_Sans',sans-serif] text-[28px] font-normal tracking-[1.4px] whitespace-nowrap">Follow us :</span>
            <FaFacebookF className="size-7" />
            <FaTwitter className="ml-[45px] size-[27px]" />
            <Instagram className="ml-[50px] size-[26px]" />
            <FaLinkedinIn className="ml-[49px] size-7" />
          </div>
        </section>
      </main>

      <div className="mt-[122px] flex shrink-0 flex-col shadow-[0_-4px_14px_rgba(0,0,0,0.07)]">
        <MapView />
        <div className="h-1 bg-[#efebea]" />
      </div>

      <section className="flex h-[78px] shrink-0 border-t border-[#9c4a45] bg-[#8e0400] pl-[128px]">
        <div className="relative flex h-full w-[852px] items-center pl-[102px]">
          <svg className="absolute inset-0 h-full w-full" viewBox="0 0 852 78" preserveAspectRatio="none">
            <rect width="852" height="78" fill="#7e0200" />
            {SKYLINE.map(([x, y, w, h, o], i) => (
              <rect key={i} x={x} y={y} width={w} height={h} fill="#300000" fillOpacity={o} />
            ))}
          </svg>
          <span className="relative w-[451px] text-2xl tracking-[1.23px] text-white">Start an amazing future with us!</span>
          <button className="relative h-[59px] w-[165px] rounded-lg border-2 border-white text-xl leading-none font-light tracking-[1.1px] text-white">
            Apply Now
          </button>
        </div>
      </section>

      <section className="flex h-[127px] shrink-0 items-center pb-0.5 pl-[167px]">
        <span className="w-[446px] text-2xl tracking-[1.45px] text-[#adadad]">Get the latest updates and news:</span>
        <div className="flex h-11 w-[326px] overflow-hidden rounded-md border border-[#dcdcdc]">
          <span className="flex flex-1 items-center pl-10 text-[17.5px] tracking-[0.78px] whitespace-nowrap text-[#cfcfcf]">
            Enter your email address
          </span>
          <button className="-my-px -mr-px flex w-[43px] items-center justify-center bg-[#8e0400] pt-0.5">
            <svg className="h-4 w-3" viewBox="0 0 12 16" fill="none" stroke="#fff" strokeWidth="3.200">
              <path d="M2.500 1.500L9 8L2.500 14.500" />
            </svg>
          </button>
        </div>
      </section>

      <footer className="flex flex-1 flex-col bg-[#252525] font-['Liberation_Sans',sans-serif] font-normal">
        <div className="flex h-[215px] pt-[65px] pl-[429px]">
          <Logo light />
        </div>
        <div className="flex h-[271px] pl-[147px] text-[17px]">
          {COLUMNS.map((c) => (
            <div key={c.title} className={`flex flex-col leading-5 ${c.cls}`}>
              <h3 className={`text-[#474747] ${c.track}`}>{c.title}</h3>
              <ul className="mt-5 flex flex-col gap-5 tracking-[1.15px] whitespace-nowrap text-[#adadad]">
                {c.links.map((l) => (
                  <li key={l}>{l}</li>
                ))}
              </ul>
              {c.title === "BUSINESS" && (
                <>
                  <h3 className="mt-[42px] tracking-[0.95px] text-[#474747]">FOLLOW US</h3>
                  <div className="mt-[21px] flex items-center text-[#adadad]">
                    <FaFacebookF className="-ml-0.5 size-4" />
                    <FaTwitter className="ml-2.5 size-4" />
                    <Instagram className="ml-3 h-[15px] w-3.5" />
                    <span className="ml-3">
                      <Play />
                    </span>
                  </div>
                </>
              )}
            </div>
          ))}
        </div>
        <div className="flex flex-1 flex-col items-center border-t border-[#4a4848] pt-[31px] text-sm leading-[20px] text-[#535353]">
          <p className="pl-1 tracking-[1.03px] whitespace-pre">
            {"©2018, Vision International Philippines  All rights reserved.   Privacy Policy  Terms of Service"}
          </p>
          <p className="mt-[11px] pl-2 tracking-[1.01px]">Crafted by : Skyrocket Studios PH</p>
        </div>
      </footer>
    </div>
  );
}
